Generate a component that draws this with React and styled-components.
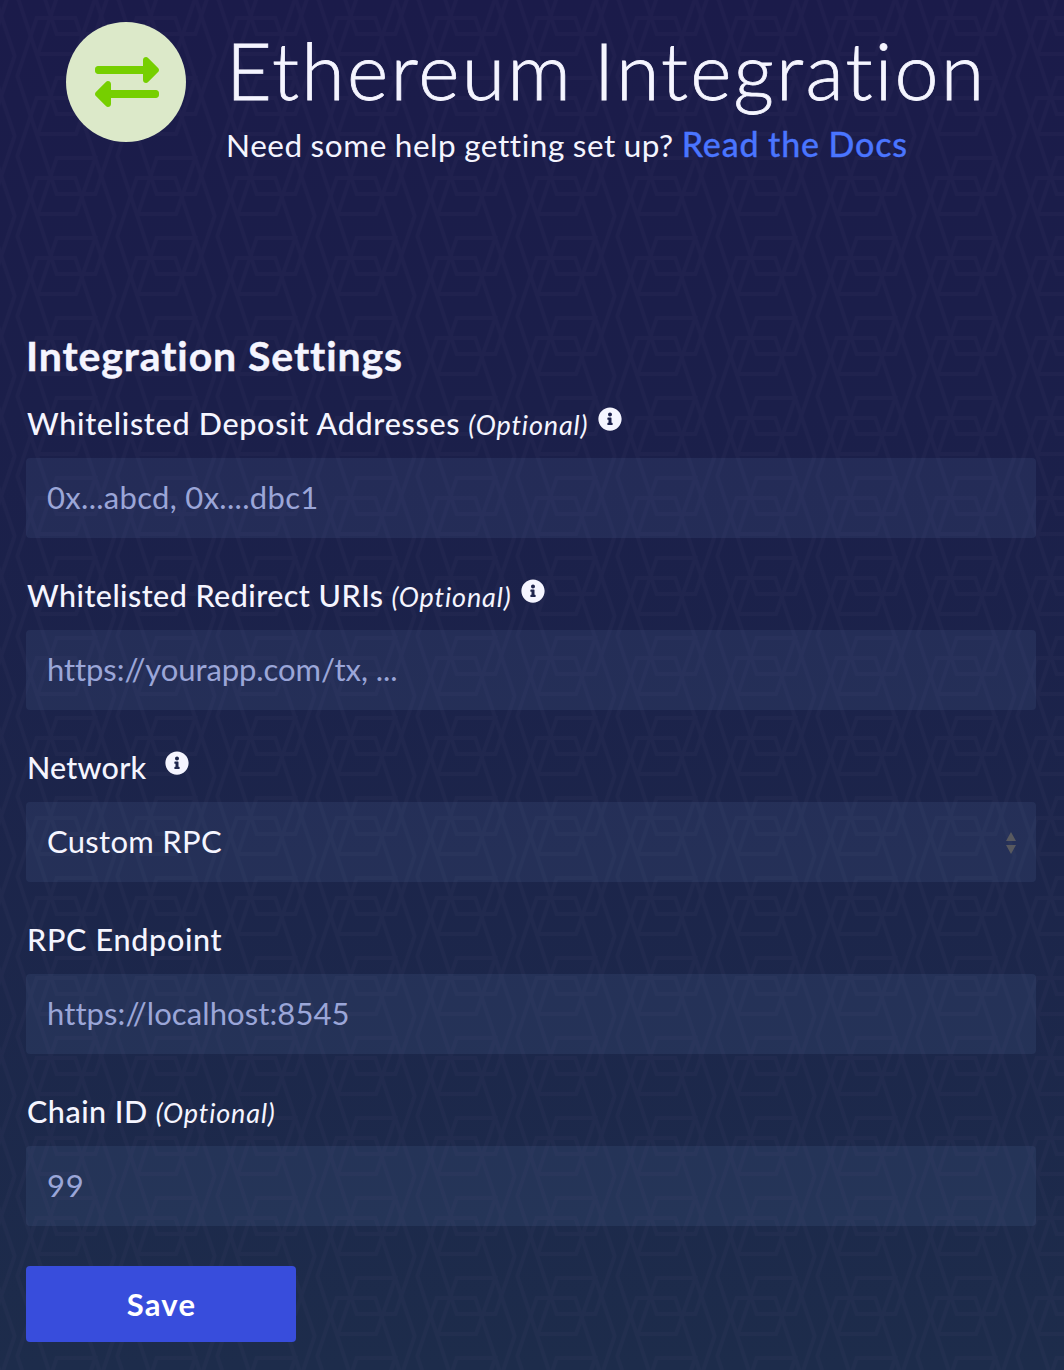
import React from "react";
import styled, { createGlobalStyle } from "styled-components";
import { FaExchangeAlt, FaInfoCircle } from "react-icons/fa";

const tile = encodeURIComponent(
  `<svg xmlns="http://www.w3.org/2000/svg" width="100" height="80" viewBox="0 0 100 80"><g opacity="0.04" fill="none" stroke="#8c7cb0" stroke-width="3.8">` +
    [-200, -100, 0, 100]
      .flatMap((x) =>
        [-240, -160, -80, 0, 80].map(
          (y) =>
            `<g transform="translate(${x} ${y})"><path d="M17.3 76 36.7 18H75.3L114.6 136 95.3 194H56.7Z"/><path d="M56.7 78H95.3L76 134H38Z"/></g>`
        )
      )
      .join("") +
    `</g></svg>`
);

const GlobalStyle = createGlobalStyle`
  *, *::before, *::after { box-sizing: border-box; }
  body {
    margin: 0;
    background: #1b1b4a;
    font-family: Lato, "Liberation Sans", sans-serif;
    font-variant-ligatures: none;
    color: #f5f5ff;
  }
`;

const Page = styled.main`
  min-height: 1370px;
  padding: 22px 28px 28px 26px;
  overflow: hidden;
  background-image: url("data:image/svg+xml,${tile}"),
    linear-gradient(180deg, #1b1b4a 0%, #1b1f4a 30%, #1d2c4b 100%);
`;

const Header = styled.header`
  display: flex;
  align-items: flex-start;
  height: 307px;
  padding-left: 40px;
`;

const Badge = styled.div`
  flex: none;
  display: flex;
  align-items: center;
  justify-content: center;
  width: 120px;
  height: 120px;
  border-radius: 50%;
  background: #dce9c9;
  color: #76cf00;
  font-size: 64px;
  padding-left: 1px;
`;

const Heading = styled.div`
  margin-left: 40px;
  white-space: nowrap;
`;

const Title = styled.h1`
  margin: 0;
  height: 99px;
  line-height: 95px;
  font-size: 79px;
  font-weight: 300;
  letter-spacing: 2.2px;
  word-spacing: -3px;
  -webkit-text-stroke: 0.8px #f5f5ff;
`;

const Subtitle = styled.p`
  margin: 0;
  line-height: 46px;
  font-size: 31.5px;
  letter-spacing: 0.57px;
  word-spacing: -0.8px;
`;

const DocsLink = styled.a`
  color: #4a75ff;
  font-size: 34px;
  font-weight: 500;
  letter-spacing: 0.85px;
  text-decoration: none;
  -webkit-text-stroke: 0.3px #4a75ff;
`;

const SectionTitle = styled.h2`
  margin: 0;
  height: 55px;
  line-height: 54px;
  font-size: 41px;
  font-weight: 700;
  letter-spacing: 0.9px;
  -webkit-text-stroke: 0.4px #f5f5ff;
`;

const Form = styled.form`
  display: flex;
  flex-direction: column;
`;

const Field = styled.div`
  height: 172px;
  padding-top: 14px;
`;

const Label = styled.label`
  display: flex;
  align-items: baseline;
  height: 60px;
  padding-left: 1px;
  line-height: 50px;
  font-size: 30.5px;
  font-weight: 500;
  letter-spacing: ${(p) => p.$spacing || "0.5px"};
  white-space: pre;
`;

const Optional = styled.em`
  margin-left: 8px;
  font-size: 27px;
  font-weight: 400;
  letter-spacing: 0.85px;
`;

const Info = styled(FaInfoCircle)`
  align-self: flex-start;
  width: 24px;
  height: 24px;
  margin: 9px 0 0 ${(p) => p.$gap || "10px"};
`;

const Control = styled.div`
  display: flex;
  align-items: center;
  justify-content: space-between;
  height: 80px;
  padding: 0 20px 0 21px;
  border-radius: 4px;
  background: rgba(92, 120, 168, 0.14);
`;

const Input = styled.input`
  flex: 1;
  width: 100%;
  padding: 0 0 2px;
  border: 0;
  outline: 0;
  background: transparent;
  color: #f5f5ff;
  font: 400 31px Lato, "Liberation Sans", sans-serif;
  letter-spacing: ${(p) => p.$spacing || "0.3px"};
  &::placeholder { color: #9ba6d8; opacity: 1; }
`;

const Value = styled.span`
  padding-bottom: 2px;
  font-size: 31px;
  letter-spacing: 0.3px;
`;

const Sorter = styled.svg`
  width: 10px;
  height: 22px;
  margin-top: 2px;
  fill: #58595f;
`;

const SaveButton = styled.button`
  width: 270px;
  height: 76px;
  margin-top: 22px;
  border: 0;
  border-radius: 4px;
  background: #384ddc;
  color: #fff;
  font: 700 31px Lato, "Liberation Sans", sans-serif;
  letter-spacing: 1.2px;
  padding: 0 0 1px 1px;
`;

function TextField({ label, optional, info, placeholder, spacing, inputSpacing }) {
  return (
    <Field>
      <Label $spacing={spacing}>
        <span>{label}</span>
        {optional && <Optional>(Optional)</Optional>}
        {info && <Info />}
      </Label>
      <Control>
        <Input placeholder={placeholder} $spacing={inputSpacing} />
      </Control>
    </Field>
  );
}

export default function App() {
  return (
    <>
      <GlobalStyle />
      <Page>
        <Header>
          <Badge><FaExchangeAlt /></Badge>
          <Heading>
            <Title>Ethereum Integration</Title>
            <Subtitle>
              Need some help getting set up? <DocsLink>Read the Docs</DocsLink>
            </Subtitle>
          </Heading>
        </Header>
        <SectionTitle>Integration Settings</SectionTitle>
        <Form>
          <TextField label="Whitelisted Deposit Addresses" spacing="0.72px" optional info placeholder="0x...abcd, 0x....dbc1" />
          <TextField label="Whitelisted Redirect URIs" spacing="0.45px" optional info placeholder="https://yourapp.com/tx, ..." inputSpacing="-0.08px" />
          <Field>
            <Label $spacing="0.2px"><span>Network</span><Info $gap="19px" /></Label>
            <Control>
              <Value>Custom RPC</Value>
              <Sorter viewBox="0 0 10 22"><path d="M5 0 10 9H0ZM0 13H10L5 22Z" /></Sorter>
            </Control>
          </Field>
          <TextField label="RPC Endpoint" spacing="0.7px" placeholder="https://localhost:8545" inputSpacing="0.1px" />
          <TextField label="Chain ID" optional placeholder="99" inputSpacing="0.8px" />
          <SaveButton type="button">Save</SaveButton>
        </Form>
      </Page>
    </>
  );
}
